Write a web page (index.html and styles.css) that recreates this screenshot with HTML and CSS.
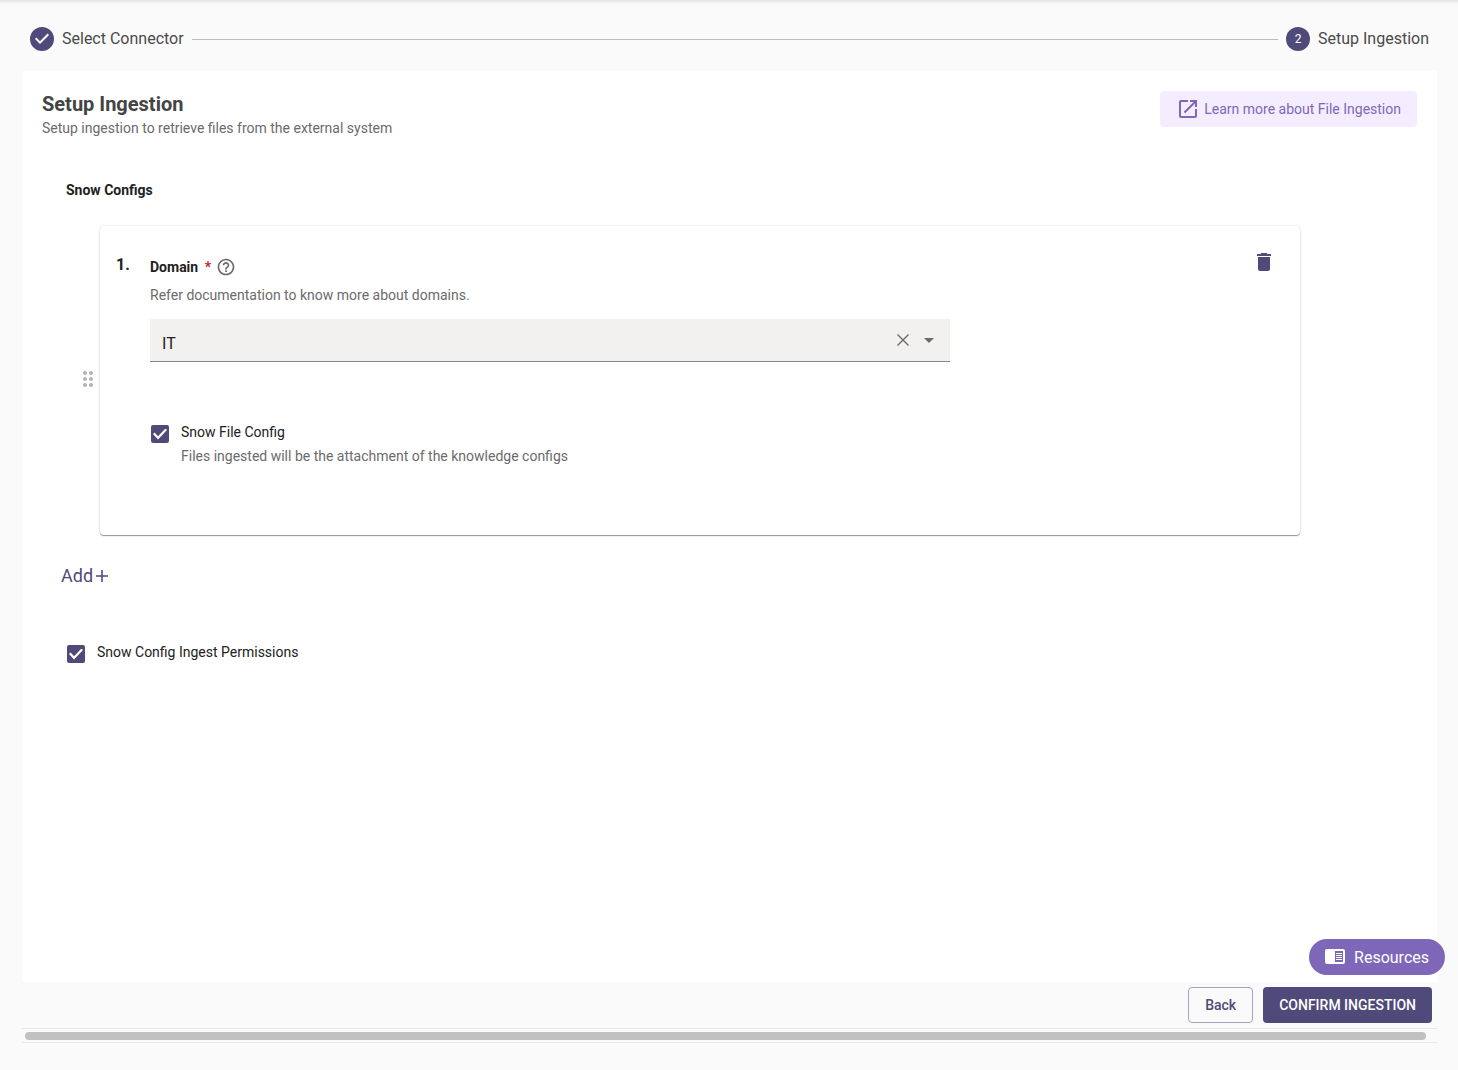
FILE: index.html
```html
<!DOCTYPE html>
<html lang="en">
<head>
    <meta charset="UTF-8">
    <meta name="viewport" content="width=device-width, initial-scale=1.0">
    <title>Setup Ingestion</title>
    <link rel="stylesheet" href="styles.css">
</head>
<body>

<div class="page">
    <!-- Stepper -->
    <ol class="stepper">
        <li class="step">
            <svg class="step-icon" viewBox="0 0 24 24"><path d="M12 0a12 12 0 1 0 0 24 12 12 0 1 0 0-24zm-2 17l-5-5 1.4-1.4 3.6 3.6 7.6-7.6L19 8l-9 9z"/></svg>
            <span>Select Connector</span>
        </li>
        <li class="step-line" aria-hidden="true"></li>
        <li class="step" aria-current="step">
            <span class="step-number">2</span>
            <span>Setup Ingestion</span>
        </li>
    </ol>

    <main class="panel">
        <header class="panel-header">
            <div>
                <h1>Setup Ingestion</h1>
                <p class="hint">Setup ingestion to retrieve files from the external system</p>
            </div>
            <a class="learn-more" href="#">
                <svg viewBox="0 0 24 24"><path d="M19 19H5V5h7V3H5c-1.11 0-2 .9-2 2v14c0 1.1.89 2 2 2h14c1.1 0 2-.9 2-2v-7h-2v7zM14 3v2h3.59l-9.83 9.83 1.41 1.41L19 6.41V10h2V3h-7z"/></svg>
                Learn more about File Ingestion
            </a>
        </header>

        <form class="configs" id="ingestionForm">
            <h2>Snow Configs</h2>

            <div class="config-row">
                <button type="button" class="drag" aria-label="Reorder">
                    <svg viewBox="0 0 24 24"><path d="M11 18c0 1.1-.9 2-2 2s-2-.9-2-2 .9-2 2-2 2 .9 2 2zm-2-8c-1.1 0-2 .9-2 2s.9 2 2 2 2-.9 2-2-.9-2-2-2zm0-6c-1.1 0-2 .9-2 2s.9 2 2 2 2-.9 2-2-.9-2-2-2zm6 4c1.1 0 2-.9 2-2s-.9-2-2-2-2 .9-2 2 .9 2 2 2zm0 2c-1.1 0-2 .9-2 2s.9 2 2 2 2-.9 2-2-.9-2-2-2zm0 6c-1.1 0-2 .9-2 2s.9 2 2 2 2-.9 2-2-.9-2-2-2z"/></svg>
                </button>
                <div class="config-card">
                    <span class="config-index">1.</span>
                    <div class="config-fields">
                        <div class="field-label">
                            <label for="domain">Domain <span class="required">*</span></label>
                            <svg viewBox="0 0 24 24"><path d="M11 18h2v-2h-2v2zm1-16C6.48 2 2 6.48 2 12s4.48 10 10 10 10-4.48 10-10S17.52 2 12 2zm0 18c-4.41 0-8-3.59-8-8s3.59-8 8-8 8 3.59 8 8-3.59 8-8 8zm0-14c-2.21 0-4 1.79-4 4h2c0-1.1.9-2 2-2s2 .9 2 2c0 2-3 1.75-3 5h2c0-2.25 3-2.5 3-5 0-2.21-1.79-4-4-4z"/></svg>
                        </div>
                        <p class="hint">Refer documentation to know more about domains.</p>
                        <div class="select-box">
                            <select id="domain">
                                <option selected>IT</option>
                            </select>
                            <div class="select-icons">
                                <button type="button" class="clear" aria-label="Clear">
                                    <svg viewBox="0 0 12 12"><path d="M.5.5l11 11M11.5.5l-11 11"/></svg>
                                </button>
                                <svg class="arrow" viewBox="0 0 10 5"><path d="M0 0h10L5 5z"/></svg>
                            </div>
                        </div>
                        <div class="check">
                            <input type="checkbox" id="fileConfig" checked>
                            <div>
                                <label for="fileConfig">Snow File Config</label>
                                <p class="hint">Files ingested will be the attachment of the knowledge configs</p>
                            </div>
                        </div>
                    </div>
                    <button type="button" class="delete" aria-label="Delete">
                        <svg viewBox="0 0 24 24"><path d="M6 19c0 1.1.9 2 2 2h8c1.1 0 2-.9 2-2V7H6v12zM19 4h-3.5l-1-1h-5l-1 1H5v2h14V4z"/></svg>
                    </button>
                </div>
            </div>

            <button type="button" class="add">Add
                <svg viewBox="0 0 12 12"><path d="M6 0v12M0 6h12"/></svg>
            </button>

            <div class="check">
                <input type="checkbox" id="permissions" checked>
                <label for="permissions">Snow Config Ingest Permissions</label>
            </div>
        </form>
    </main>

    <footer class="actions">
        <button type="button" class="btn btn-outline">Back</button>
        <button type="submit" form="ingestionForm" class="btn btn-primary">CONFIRM INGESTION</button>
    </footer>

    <div class="scroll-track"><div class="scroll-thumb"></div></div>
</div>

<button type="button" class="resources">
    <svg viewBox="0 0 20 16"><path fill-rule="evenodd" d="M2 0h16a2 2 0 0 1 2 2v11a2 2 0 0 1-2 2H2a2 2 0 0 1-2-2V2a2 2 0 0 1 2-2zm8 2v11h8V2zm1 2h6v1h-6zm0 2h6v1h-6zm0 2h6v1h-6zm0 2h6v1h-6z"/></svg>
    Resources
</button>

</body>
</html>
```
FILE: styles.css
```css
* {
    box-sizing: border-box;
}
body {
    margin: 0;
    font-family: Roboto, Arial, sans-serif;
    font-size: 14px;
    line-height: 20px;
    color: #212121;
    background-color: #fafafa;
}
h1, h2, p, ol {
    margin: 0;
    padding: 0;
}
svg {
    display: block;
    flex: none;
    fill: currentColor;
}
button {
    font-family: inherit;
    padding: 0;
    border: none;
    background: none;
    color: #4f4a79;
    cursor: pointer;
}
.page {
    display: flex;
    flex-direction: column;
    min-height: 100vh;
    padding: 27px 21px 27px 22px;
    background: linear-gradient(#e4e4e4, #fafafa 4px);
}
.hint {
    color: #6b6b6b;
}

/* stepper */
.stepper {
    display: flex;
    align-items: center;
    gap: 8px;
    padding: 0 8px;
    margin-bottom: 20px;
    font-size: 16px;
    line-height: 24px;
    color: #4a4a4a;
    list-style: none;
}
.step {
    display: flex;
    align-items: center;
    gap: 8px;
}
.step-icon {
    width: 24px;
    height: 24px;
    color: #4f4a79;
}
.step-number {
    width: 24px;
    height: 24px;
    border-radius: 50%;
    background-color: #4f4a79;
    color: white;
    font-size: 12px;
    text-align: center;
}
.step-line {
    flex: 1;
    height: 1px;
    background-color: #bdbdbd;
}

/* main panel */
.panel {
    flex: 1;
    padding: 20px;
    background-color: white;
}
.panel-header {
    display: flex;
    justify-content: space-between;
    align-items: flex-start;
}
h1 {
    font-size: 20px;
    line-height: 27px;
    color: #444444;
}
.learn-more {
    display: flex;
    align-items: center;
    gap: 4px;
    height: 36px;
    padding: 0 16px;
    border-radius: 4px;
    background-color: #f4edff;
    color: #7e67b9;
    text-decoration: none;
}
.learn-more svg {
    width: 24px;
    height: 24px;
}
.configs {
    padding: 42px 117px 0 24px;
}
h2 {
    font-size: 14px;
    line-height: 20px;
}
.config-row {
    display: flex;
    align-items: center;
    margin-top: 26px;
}
.drag {
    width: 24px;
    margin: 0 0 4px 10px;
    color: #b3b3b3;
    cursor: grab;
}
.drag svg {
    width: 24px;
    height: 24px;
}
.config-card {
    flex: 1;
    display: flex;
    align-items: flex-start;
    padding: 24px 24px 69px 16px;
    border-radius: 4px;
    box-shadow: 0 1px 1px rgba(0,0,0,0.4), 0 0 3px rgba(0,0,0,0.12);
}
.config-index {
    width: 34px;
    padding-top: 5px;
    font-size: 16px;
    font-weight: bold;
}
.config-fields {
    flex: 1;
}
.field-label {
    display: flex;
    align-items: center;
    gap: 5px;
    height: 34px;
    font-weight: bold;
}
.field-label svg {
    width: 20px;
    height: 20px;
    color: #6b6b6b;
}
.field-label + .hint {
    margin-top: 1px;
}
.required {
    margin-left: 3px;
    color: #c62828;
}
.select-box {
    position: relative;
    max-width: 800px;
    margin: 14px 0 60px;
}
select {
    display: block;
    width: 100%;
    height: 43px;
    padding: 6px 64px 0 12px;
    border: none;
    border-bottom: 1px solid #858585;
    border-radius: 0;
    appearance: none;
    background-color: #f3f1f0;
    color: #212121;
    font-family: inherit;
    font-size: 16px;
}
.select-icons {
    position: absolute;
    top: 0;
    right: 16px;
    display: flex;
    align-items: center;
    gap: 15px;
    height: 42px;
    color: #6b6b6b;
    pointer-events: none;
}
.clear {
    color: inherit;
    pointer-events: auto;
}
.clear svg {
    width: 12px;
    height: 12px;
    stroke: currentColor;
    stroke-width: 1.4;
}
.arrow {
    width: 10px;
    height: 5px;
}
.delete svg {
    width: 24px;
    height: 24px;
}
.check {
    display: flex;
    align-items: flex-start;
    gap: 12px;
    padding-left: 1px;
}
.check .hint {
    margin-top: 4px;
}
.check label {
    display: block;
}
input[type="checkbox"] {
    flex: none;
    width: 18px;
    height: 18px;
    margin: 3px 0 0;
    border: 2px solid #4f4a79;
    border-radius: 2px;
    appearance: none;
}
input[type="checkbox"]:checked {
    display: grid;
    place-items: center;
    background-color: #4f4a79;
}
input[type="checkbox"]:checked::before {
    content: "";
    width: 14px;
    height: 11px;
    background-color: white;
    clip-path: polygon(0 50%, 11% 37%, 36% 70%, 89% 0, 100% 13%, 36% 100%);
}
.add {
    display: flex;
    align-items: center;
    gap: 3px;
    margin: 29px 0 54px -5px;
    font-size: 18px;
    line-height: 24px;
}
.add svg {
    width: 12px;
    height: 12px;
    stroke: currentColor;
    stroke-width: 1.6;
}

/* bottom buttons */
.actions {
    display: flex;
    justify-content: flex-end;
    gap: 10px;
    padding: 5px;
}
.btn {
    height: 36px;
    padding: 0 16px;
    border-radius: 4px;
    font-size: 14px;
    font-weight: 500;
}
.btn-outline {
    border: 1px solid #a7a4bc;
}
.btn-primary {
    background-color: #4f4a79;
    color: white;
}
.scroll-track {
    padding: 3px 11px 2px 3px;
    border: 1px solid #e8e8e8;
    border-width: 1px 0;
}
.scroll-thumb {
    height: 8px;
    border-radius: 4px;
    background-color: #c1c1c1;
}
.resources {
    position: fixed;
    right: 13px;
    bottom: 95px;
    display: flex;
    align-items: center;
    gap: 9px;
    height: 36px;
    padding: 0 16px;
    border-radius: 18px;
    background-color: #7e67b9;
    color: white;
    font-size: 16px;
}
.resources svg {
    width: 20px;
    height: 16px;
}
```
